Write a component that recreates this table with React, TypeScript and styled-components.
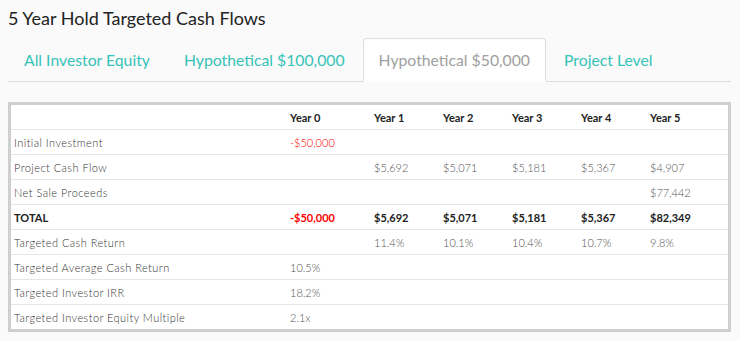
import React from 'react';
import styled, { createGlobalStyle } from 'styled-components';

const GlobalStyle = createGlobalStyle`
  body {
    margin: 8px;
    background-color: #fafafa;
    font-family: Lato, "Open Sans", sans-serif;
  }
`;

type Row = {
  label: string;
  values: string[];
  bold?: boolean;
  red?: boolean;
};

const years = ['Year 0', 'Year 1', 'Year 2', 'Year 3', 'Year 4', 'Year 5'];

const rows: Row[] = [
  { label: 'Initial Investment', values: ['-$50,000', '', '', '', '', ''], red: true },
  { label: 'Project Cash Flow', values: ['', '$5,692', '$5,071', '$5,181', '$5,367', '$4,907'] },
  { label: 'Net Sale Proceeds', values: ['', '', '', '', '', '$77,442'] },
  { label: 'TOTAL', values: ['-$50,000', '$5,692', '$5,071', '$5,181', '$5,367', '$82,349'], bold: true, red: true },
  { label: 'Targeted Cash Return', values: ['', '11.4%', '10.1%', '10.4%', '10.7%', '9.8%'] },
  { label: 'Targeted Average Cash Return', values: ['10.5%', '', '', '', '', ''] },
  { label: 'Targeted Investor IRR', values: ['18.2%', '', '', '', '', ''] },
  { label: 'Targeted Investor Equity Multiple', values: ['2.1x', '', '', '', '', ''] },
];

const tabs = ['All Investor Equity', 'Hypothetical $100,000', 'Hypothetical $50,000', 'Project Level'];

const App: React.FC = () => {
  return (
    <Page>
      <GlobalStyle />
      <Title>5 Year Hold Targeted Cash Flows</Title>
      <TabBar>
        {tabs.map((t, i) => (
          <Tab key={t} active={i === 2}>
            {t}
          </Tab>
        ))}
      </TabBar>
      <Table>
        <HeaderRow>
          <HeadCell />
          {years.map((y) => (
            <HeadCell key={y}>{y}</HeadCell>
          ))}
          <HeadCell />
        </HeaderRow>
        {rows.map((r) => (
          <BodyRow key={r.label}>
            <LabelCell bold={r.bold}>{r.label}</LabelCell>
            {r.values.map((v, i) => (
              <ValueCell key={i} bold={r.bold} red={r.red && i === 0}>
                {v}
              </ValueCell>
            ))}
            <ValueCell />
          </BodyRow>
        ))}
      </Table>
    </Page>
  );
};

const Page = styled.div`
  width: 723px;
`;

const Title = styled.h2`
  margin: 0 0 10px;
  font-size: 18px;
  line-height: 20px;
  font-weight: 400;
  color: #222;
`;

const TabBar = styled.div`
  display: flex;
  border-bottom: 1px solid #ddd;
`;

const Tab = styled.div<{ active?: boolean }>`
  margin-right: 2px;
  margin-bottom: -1px;
  padding: 10px 15px;
  font-size: 15.75px;
  line-height: 22px;
  font-weight: 400;
  border: 1px solid ${(p) => (p.active ? '#ddd' : 'transparent')};
  border-bottom-color: ${(p) => (p.active ? '#fff' : 'transparent')};
  border-radius: 4px 4px 0 0;
  background-color: ${(p) => (p.active ? '#fff' : 'transparent')};
  color: ${(p) => (p.active ? '#a0a0a0' : '#36c3b8')};
  cursor: pointer;
`;

const Table = styled.div`
  margin-top: 20px;
  border: 3px solid #cfcfcf;
  background-color: #fff;
`;

const gridCols = `275px 84px 69px 69px 69px 69px 69px 1fr`;

const HeaderRow = styled.div`
  display: grid;
  grid-template-columns: ${gridCols};
  height: 24px;
  align-items: center;
`;

const BodyRow = styled(HeaderRow)`
  border-top: 1px solid #e6e6e6;
`;

const HeadCell = styled.div`
  padding: 0 4px;
  font-size: 11px;
  font-weight: 700;
  color: #222;
`;

const LabelCell = styled.div<{ bold?: boolean }>`
  padding: 0 3px;
  font-size: 11px;
  font-weight: ${(p) => (p.bold ? 700 : 300)};
  color: ${(p) => (p.bold ? '#222' : '#333')};
  letter-spacing: ${(p) => (p.bold ? '0' : '0.45px')};
  white-space: nowrap;
`;

const ValueCell = styled.div<{ bold?: boolean; red?: boolean }>`
  padding: 0 4px;
  font-size: 11px;
  font-weight: ${(p) => (p.bold ? 700 : 300)};
  color: ${(p) => (p.red ? '#f00' : p.bold ? '#222' : '#555')};
  white-space: nowrap;
`;

export default App;
